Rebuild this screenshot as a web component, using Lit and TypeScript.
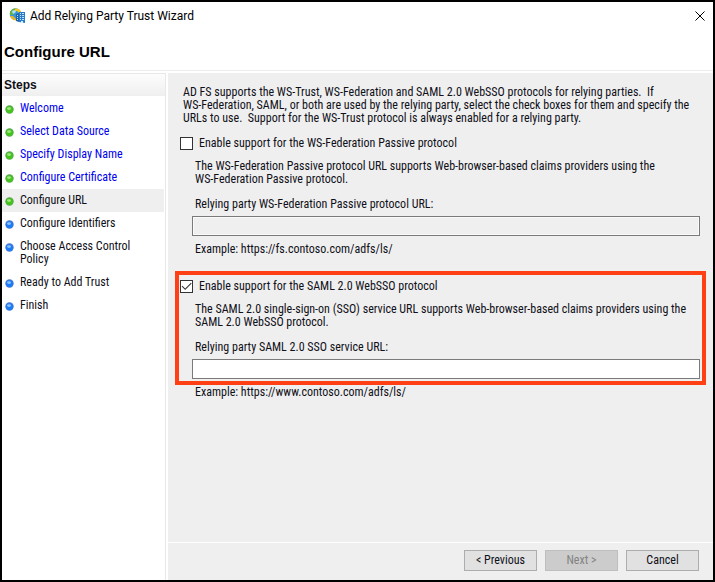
import { LitElement, html, css, svg, nothing } from "lit";
import { customElement, property, state } from "lit/decorators.js";
import { classMap } from "lit/directives/class-map.js";

type StepState = "done" | "current" | "todo";

interface Step {
  label: string;
  state: StepState;
}

const STEPS: Step[] = [
  { label: "Welcome", state: "done" },
  { label: "Select Data Source", state: "done" },
  { label: "Specify Display Name", state: "done" },
  { label: "Configure Certificate", state: "done" },
  { label: "Configure URL", state: "current" },
  { label: "Configure Identifiers", state: "todo" },
  { label: "Choose Access Control Policy", state: "todo" },
  { label: "Ready to Add Trust", state: "todo" },
  { label: "Finish", state: "todo" },
];

const bullet = (done: boolean) => {
  const [rim, fill, shine] = done
    ? ["#3a9a2c", "#44c41c", "#a0e880"]
    : ["#2560c8", "#1a7cf8", "#8cc4ff"];
  return html`<svg class="bullet" viewBox="0 0 9 9" aria-hidden="true">
    ${svg`<circle cx="4.5" cy="4.5" r="4.2" fill=${rim} opacity="0.85"></circle>
    <circle cx="4.5" cy="4.8" r="3.3" fill=${fill}></circle>
    <ellipse cx="4" cy="3.6" rx="2" ry="1.3" fill=${shine}></ellipse>`}
  </svg>`;
};

@customElement("wizard-steps")
class WizardSteps extends LitElement {
  @property({ attribute: false }) steps: Step[] = [];

  static styles = css`
    :host {
      display: block;
      border-top: 1px solid #e8e8e8;
      border-right: 1px solid #e8e8e8;
      background: #fff;
    }
    .title {
      margin: 0;
      padding: 0 2px;
      font: bold 12px/22px "Liberation Sans", Arial, sans-serif;
      background: linear-gradient(#fdfdfd, #efefef);
    }
    .list {
      list-style: none;
      margin: 0;
      padding: 1px 0 0;
    }
    .step {
      display: flex;
      gap: 6px;
      padding: 5px 30px 5px 3px;
      margin-right: 1px;
      line-height: 13px;
    }
    .step.current {
      background: #efefef;
    }
    .bullet {
      flex: none;
      width: 9px;
      height: 9px;
      margin-top: 3px;
    }
    .link {
      color: #0000f0;
      text-decoration: none;
    }
  `;

  render() {
    return html`
      <h2 class="title">Steps</h2>
      <ol class="list">
        ${this.steps.map(
          (s) => html`<li
            class=${classMap({ step: true, current: s.state === "current" })}
            aria-current=${s.state === "current" ? "step" : nothing}
          >
            ${bullet(s.state !== "todo")}
            ${s.state === "done"
              ? html`<a class="link" href="#">${s.label}</a>`
              : html`<span>${s.label}</span>`}
          </li>`
        )}
      </ol>
    `;
  }
}

@customElement("protocol-section")
class ProtocolSection extends LitElement {
  @property() option = "";
  @property({ attribute: false }) description: string[] = [];
  @property() label = "";
  @property() example = "";
  @property({ type: Boolean }) enabled = false;
  @property({ type: Boolean }) highlighted = false;

  static styles = css`
    :host {
      display: block;
      line-height: 13px;
    }
    .box {
      border: 4px solid transparent;
      padding: 5px 2px 2px 1px;
    }
    .box.highlighted {
      border-color: #ff4015;
    }
    .option {
      display: flex;
      align-items: center;
      gap: 6px;
    }
    .check {
      appearance: none;
      flex: none;
      display: grid;
      place-items: center;
      width: 13px;
      height: 13px;
      margin: 0;
      border: 1px solid #333;
      background: #fff;
    }
    .check:checked::before {
      content: "";
      width: 11px;
      height: 11px;
      background: #333;
      clip-path: polygon(6% 50%, 13% 43%, 38% 68%, 90% 16%, 97% 23%, 38% 82%);
    }
    .description {
      margin: 10px 0 12px 15px;
    }
    .label {
      display: block;
      margin: 0 0 5px 15px;
    }
    .url {
      display: block;
      box-sizing: border-box;
      width: calc(100% - 12px);
      height: 20px;
      margin: 0 0 0 12px;
      padding: 0 3px;
      border: 1px solid #7a7a7a;
      border-radius: 0;
      background: #fff;
      font: inherit;
      outline: none;
    }
    .url:disabled {
      background: #efefef;
      box-shadow: inset 0 0 0 1px #fafafa;
    }
    .example {
      margin: 1px 0 0 20px;
    }
  `;

  private toggle(e: Event) {
    this.enabled = (e.target as HTMLInputElement).checked;
  }

  render() {
    return html`
      <div class=${classMap({ box: true, highlighted: this.highlighted })}>
        <div class="option">
          <input
            class="check"
            id="enable"
            type="checkbox"
            .checked=${this.enabled}
            @change=${this.toggle}
          />
          <label for="enable">${this.option}</label>
        </div>
        <p class="description">
          ${this.description.map((line, i) => (i ? html`<br />${line}` : line))}
        </p>
        <label class="label" for="url">${this.label}</label>
        <input class="url" id="url" type="text" ?disabled=${!this.enabled} />
      </div>
      <p class="example">${this.example}</p>
    `;
  }
}

@customElement("app-root")
class AppRoot extends LitElement {
  @state() private steps = STEPS;

  static styles = css`
    :host {
      display: flex;
      flex-direction: column;
      box-sizing: border-box;
      min-height: 100vh;
      border: 2px solid #000;
      background: #fff;
      color: #101018;
      font: 12px/13px "Roboto Condensed", Roboto, "Liberation Sans", sans-serif;
    }
    .titlebar {
      display: flex;
      align-items: center;
      gap: 4px;
      height: 28px;
      padding: 0 7px;
    }
    .logo {
      width: 17px;
      height: 16px;
    }
    .caption {
      flex: 1;
      font: 12px/16px Roboto, "Open Sans", sans-serif;
      color: #000;
    }
    .close {
      display: grid;
      place-items: center;
      width: 12px;
      height: 14px;
      padding: 0;
      border: 0;
      background: none;
    }
    .heading {
      margin: 0;
      padding: 12px 2px 9px;
      border-bottom: 1px solid #ececec;
      font: bold 15px/19px "Liberation Sans", Arial, sans-serif;
      color: #000;
    }
    .body {
      flex: 1;
      display: grid;
      grid-template-columns: 164px 1fr;
      column-gap: 2px;
      padding-top: 2px;
    }
    .panel {
      display: flex;
      flex-direction: column;
      background: #efefef;
    }
    .content {
      flex: 1;
      padding: 13px 7px 0;
    }
    .intro {
      margin: 0 0 3px 8px;
    }
    .second {
      margin-top: 15px;
    }
    .footer {
      display: flex;
      justify-content: flex-end;
      gap: 8px;
      padding: 7px 14px 9px;
      border-top: 1px solid #fff;
    }
    .button {
      width: 73px;
      height: 21px;
      padding: 0;
      border: 1px solid #adadad;
      background: #e1e1e1;
      color: #101018;
      font: inherit;
    }
    .button:disabled {
      border-color: #bfbfbf;
      background: #ccc;
      color: #838383;
    }
  `;

  render() {
    return html`
      <header class="titlebar">
        <svg class="logo" viewBox="0 0 17 16" aria-hidden="true">
          <circle cx="6.5" cy="6" r="5.8" fill="#3a94dc"></circle>
          <path d="M1 4 Q3 0 7 0.5 L8 2 L6 4 L4 7 L1 7 Z" fill="#62b440"></path>
          <path d="M6 0.5 Q11 0 12 4.5 L10 5 L8 3 L6 3 Z" fill="#f4c820"></path>
          <path d="M3 3 L6 2 L7 4 L4 6 Z" fill="#b4e0fa"></path>
          <path d="M1 8 L4 8 L7 11 L7 12.5 Q2 12 1 8 Z" fill="#e8b428"></path>
          <path d="M7 6 L10 5 V14 L7 13 Z" fill="#1c64a8"></path>
          <path d="M10 4 H16 V15 L10 14 Z" fill="#2a7cc8"></path>
          <path
            d="M8 7.5h1M8 9.5h1M8 11.5h1M11 5.5h1M13 5.5h2M11 7.5h1M13 7.5h2M11 9.5h1M13 9.5h2M11 11.5h1M13 11.5h2"
            stroke="#b8e4ff"
            stroke-width="1"
          ></path>
          <path d="M12 13h2V15h-2z" fill="#d8f0ff"></path>
        </svg>
        <span class="caption">Add Relying Party Trust Wizard</span>
        <button class="close" aria-label="Close">
          <svg width="10" height="10" viewBox="0 0 10 10">
            <path d="M0.5 0.5 9.5 9.5M9.5 0.5 0.5 9.5" stroke="#000" stroke-width="1"></path>
          </svg>
        </button>
      </header>
      <h1 class="heading">Configure URL</h1>
      <div class="body">
        <wizard-steps .steps=${this.steps}></wizard-steps>
        <main class="panel">
          <div class="content">
            <p class="intro">
              AD FS supports the WS-Trust, WS-Federation and SAML 2.0 WebSSO protocols for relying parties.&nbsp; If<br />
              WS-Federation, SAML, or both are used by the relying party, select the check boxes for them and specify the<br />
              URLs to use.&nbsp; Support for the WS-Trust protocol is always enabled for a relying party.
            </p>
            <protocol-section
              option="Enable support for the WS-Federation Passive protocol"
              .description=${[
                "The WS-Federation Passive protocol URL supports Web-browser-based claims providers using the",
                "WS-Federation Passive protocol.",
              ]}
              label="Relying party WS-Federation Passive protocol URL:"
              example="Example: https://fs.contoso.com/adfs/ls/"
            ></protocol-section>
            <protocol-section
              class="second"
              option="Enable support for the SAML 2.0 WebSSO protocol"
              .description=${[
                "The SAML 2.0 single-sign-on (SSO) service URL supports Web-browser-based claims providers using the",
                "SAML 2.0 WebSSO protocol.",
              ]}
              label="Relying party SAML 2.0 SSO service URL:"
              example="Example: https://www.contoso.com/adfs/ls/"
              enabled
              highlighted
            ></protocol-section>
          </div>
          <footer class="footer">
            <button class="button">&lt; Previous</button>
            <button class="button" disabled>Next &gt;</button>
            <button class="button">Cancel</button>
          </footer>
        </main>
      </div>
    `;
  }
}
